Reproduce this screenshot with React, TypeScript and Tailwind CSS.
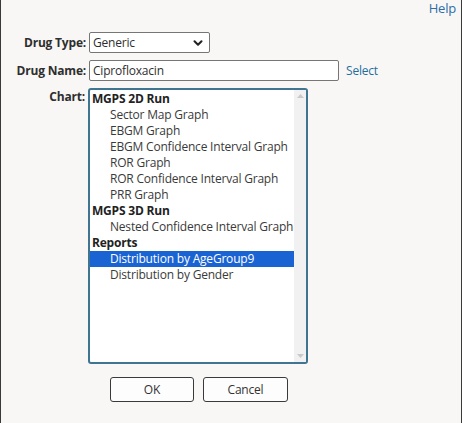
import { ChevronDown } from 'lucide-react';

const groups: { title: string; items: string[] }[] = [
  {
    title: 'MGPS 2D Run',
    items: [
      'Sector Map Graph',
      'EBGM Graph',
      'EBGM Confidence Interval Graph',
      'ROR Graph',
      'ROR Confidence Interval Graph',
      'PRR Graph',
    ],
  },
  { title: 'MGPS 3D Run', items: ['Nested Confidence Interval Graph'] },
  { title: 'Reports', items: ['Distribution by AgeGroup9', 'Distribution by Gender'] },
];

const selected = 'Distribution by AgeGroup9';

export default function App() {
  return (
    <div
      className="w-[462px] h-[423px] bg-[#f8f7f5] border-l border-r border-[#3a3a3a] text-[#2e2e2e] text-[12px] tracking-[-0.2px] overflow-hidden whitespace-nowrap"
      style={{ fontFamily: '"Open Sans", "Noto Sans", sans-serif' }}
    >
      {/* Help link */}
      <div className="flex justify-end pr-[5px] h-[32px] leading-[17px]">
        <span className="text-[#2d6ea8] text-[13px]">Help</span>
      </div>

      {/* Drug type */}
      <div className="flex items-center h-[21px]">
        <label className="w-[88px] text-right pr-[3px] font-bold">Drug Type:</label>
        <div className="w-[121px] h-[21px] bg-white border border-[#767676] rounded-[2px] flex items-center justify-between pl-[3px] pr-[4px]">
          <span>Generic</span>
          <ChevronDown size={14} strokeWidth={3.5} className="text-[#222]" />
        </div>
      </div>

      {/* Drug name */}
      <div className="flex items-center h-[21px] mt-[7px]">
        <label className="w-[88px] text-right pr-[3px] font-bold">Drug Name:</label>
        <div className="w-[250px] h-[21px] bg-white border border-[#767676] rounded-[2px] flex items-center pl-[3px]">
          Ciprofloxacin
        </div>
        <span className="ml-[7px] text-[#1f6e9e]">Select</span>
      </div>

      {/* Chart */}
      <div className="flex mt-[7px]">
        <label className="w-[87px] text-right pr-[3px] font-bold pt-[1px] leading-[16px]">Chart:</label>
        <div className="w-[220px] h-[276px] bg-white border-2 border-[#3f7590] rounded-[3px] flex">
          <div className="flex-1 pt-[1px]">
            {groups.map((g) => (
              <div key={g.title}>
                <div className="h-[16px] leading-[16px] pl-[2px] font-bold text-[#222]">{g.title}</div>
                {g.items.map((it) => (
                  <div
                    key={it}
                    className={`h-[16px] leading-[16px] pl-[20px] ${
                      it === selected ? 'bg-[#1a63d3] text-white' : 'text-[#3a3a3a]'
                    }`}
                  >
                    {it}
                  </div>
                ))}
              </div>
            ))}
          </div>
          <div className="w-[12px] bg-[#f1f1f1] flex flex-col justify-between items-center py-[4px]">
            <svg width="7" height="4" viewBox="0 0 7 4">
              <path d="M3.5 0 L7 4 L0 4 Z" fill="#c9c9c9" />
            </svg>
            <svg width="7" height="4" viewBox="0 0 7 4">
              <path d="M0 0 L7 0 L3.5 4 Z" fill="#c9c9c9" />
            </svg>
          </div>
        </div>
      </div>

      {/* Buttons */}
      <div className="flex gap-[9px] ml-[109px] mt-[13px]">
        <button className="w-[84px] h-[25px] bg-[#fdfdfd] border border-[#3a3a3a] rounded-[3px] text-[#333]">
          OK
        </button>
        <button className="w-[85px] h-[25px] bg-[#fdfdfd] border border-[#3a3a3a] rounded-[3px] text-[#333]">
          Cancel
        </button>
      </div>
    </div>
  );
}
